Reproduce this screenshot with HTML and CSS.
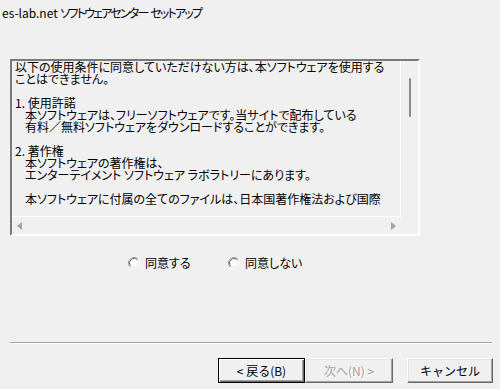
FILE: index.html
```html
<!DOCTYPE html>
<html lang="ja">
<head>
  <meta charset="UTF-8">
  <title>es-lab.net ソフトウェアセンター セットアップ</title>
  <link rel="stylesheet" href="styles.css">
</head>
<body>

  <div class="dialog">
    <div class="title">es-lab.net <span class="title-ja">ソフトウェアセンター</span> <span class="title-ja">セットアップ</span></div>

    <div class="license">
      <div class="license-text">
        <div class="line">以下の使用条件に同意していただけない方は、本ソフトウェアを使用する</div>
        <div class="line">ことはできません。</div>
        <div class="line"></div>
        <div class="line">1. 使用許諾</div>
        <div class="line indent">本ソフトウェアは、フリーソフトウェアです。当サイトで配布している</div>
        <div class="line indent">有料／無料ソフトウェアをダウンロードすることができます。</div>
        <div class="line"></div>
        <div class="line">2. 著作権</div>
        <div class="line indent">本ソフトウェアの著作権は、</div>
        <div class="line indent">エンターテイメント ソフトウェア ラボラトリーにあります。</div>
        <div class="line"></div>
        <div class="line indent">本ソフトウェアに付属の全てのファイルは、日本国著作権法および国際</div>
      </div>
      <div class="vscroll"><div class="thumb"></div></div>
      <div class="hscroll">
        <span class="arrow-left"></span>
        <span class="arrow-right"></span>
      </div>
      <div class="corner"></div>
    </div>

    <div class="choices">
      <label class="choice">
        <svg class="radio" width="12" height="12" viewBox="0 0 12 12">
          <circle cx="6" cy="6" r="4.2" fill="#ffffff"/>
          <path d="M9.89 2.11 A5.5 5.5 0 0 0 2.11 9.89" fill="none" stroke="#a0a0a0"/>
          <path d="M9.18 2.82 A4.5 4.5 0 0 0 2.82 9.18" fill="none" stroke="#696969"/>
          <path d="M2.11 9.89 A5.5 5.5 0 0 0 9.89 2.11" fill="none" stroke="#ffffff"/>
          <path d="M2.82 9.18 A4.5 4.5 0 0 0 9.18 2.82" fill="none" stroke="#e3e3e3"/>
        </svg>
        同意する
      </label>
      <label class="choice">
        <svg class="radio" width="12" height="12" viewBox="0 0 12 12">
          <circle cx="6" cy="6" r="4.2" fill="#ffffff"/>
          <path d="M9.89 2.11 A5.5 5.5 0 0 0 2.11 9.89" fill="none" stroke="#a0a0a0"/>
          <path d="M9.18 2.82 A4.5 4.5 0 0 0 2.82 9.18" fill="none" stroke="#696969"/>
          <path d="M2.11 9.89 A5.5 5.5 0 0 0 9.89 2.11" fill="none" stroke="#ffffff"/>
          <path d="M2.82 9.18 A4.5 4.5 0 0 0 9.18 2.82" fill="none" stroke="#e3e3e3"/>
        </svg>
        同意しない
      </label>
    </div>

    <div class="separator"></div>

    <div class="buttons">
      <button class="btn default">&lt; 戻る(B)</button>
      <button class="btn next" disabled>次へ(N) &gt;</button>
      <button class="btn cancel">キャンセル</button>
    </div>
  </div>

</body>
</html>
```

FILE: styles.css
```css
body {
  margin: 0;
  background: #f0f0f0;
  font-family: "Noto Sans CJK JP", "Noto Sans", sans-serif;
  font-size: 12px;
  color: #000;
  font-feature-settings: "palt";
}

.dialog {
  width: 500px;
  height: 389px;
  overflow: hidden;
}

.title {
  height: 25px;
  line-height: 25px;
  padding-left: 2px;
  white-space: nowrap;
}

.title-ja {
  letter-spacing: -1.8px;
}

/* license box with sunken border */
.license {
  margin: 34px 0 0 10px;
  width: 406px;
  height: 173px;
  display: grid;
  grid-template-columns: 389px 17px;
  grid-template-rows: 156px 17px;
  border-top: 2px solid #7a7a7a;
  border-left: 2px solid #7a7a7a;
  border-right: 2px solid #ffffff;
  border-bottom: 2px solid #ffffff;
}

.license-text {
  border-right: 1px solid #ffffff;
  border-bottom: 1px solid #ffffff;
  padding: 0 0 0 3px;
  white-space: nowrap;
}

.line {
  height: 12px;
  line-height: 12px;
}

.indent {
  padding-left: 10px;
}

.vscroll {
  position: relative;
}

.vscroll .thumb {
  position: absolute;
  left: 8px;
  top: 17px;
  width: 2px;
  height: 39px;
  border-radius: 1px;
  background: #8a8a8a;
}

.hscroll {
  display: flex;
  justify-content: space-between;
  align-items: center;
  padding: 0 5px;
}

.arrow-left {
  width: 0;
  height: 0;
  border-top: 4px solid transparent;
  border-bottom: 4px solid transparent;
  border-right: 5px solid #a3a3a3;
}

.arrow-right {
  width: 0;
  height: 0;
  border-top: 4px solid transparent;
  border-bottom: 4px solid transparent;
  border-left: 5px solid #a3a3a3;
}

/* radio choices */
.choices {
  display: flex;
  margin: 21px 0 0 128px;
  height: 12px;
}

.choice {
  display: flex;
  align-items: center;
  width: 100px;
  line-height: 12px;
}

.radio {
  margin-right: 5px;
  flex-shrink: 0;
}

.separator {
  margin: 73px 8px 0 10px;
  border-top: 1px solid #a0a0a0;
  border-bottom: 1px solid #ffffff;
}

/* bottom buttons */
.buttons {
  display: flex;
  margin: 14px 0 0 218px;
}

.btn {
  width: 87px;
  height: 25px;
  padding: 0;
  background: #f0f0f0;
  font-family: inherit;
  font-size: 12px;
  color: #000;
  border: 1px solid;
  border-color: #ffffff #696969 #696969 #ffffff;
  box-shadow: inset -1px -1px #a0a0a0, inset 1px 1px #e3e3e3;
  border-radius: 0;
}

.btn.default {
  border-color: #000;
  box-shadow: inset 1px 1px #ffffff, inset -1px -1px #696969, inset -2px -2px #a0a0a0;
}

.btn.next {
  width: 88px;
  color: #a0a0a0;
  text-shadow: 1px 1px #ffffff;
}

.btn.cancel {
  width: 86px;
  margin-left: 14px;
}
```
